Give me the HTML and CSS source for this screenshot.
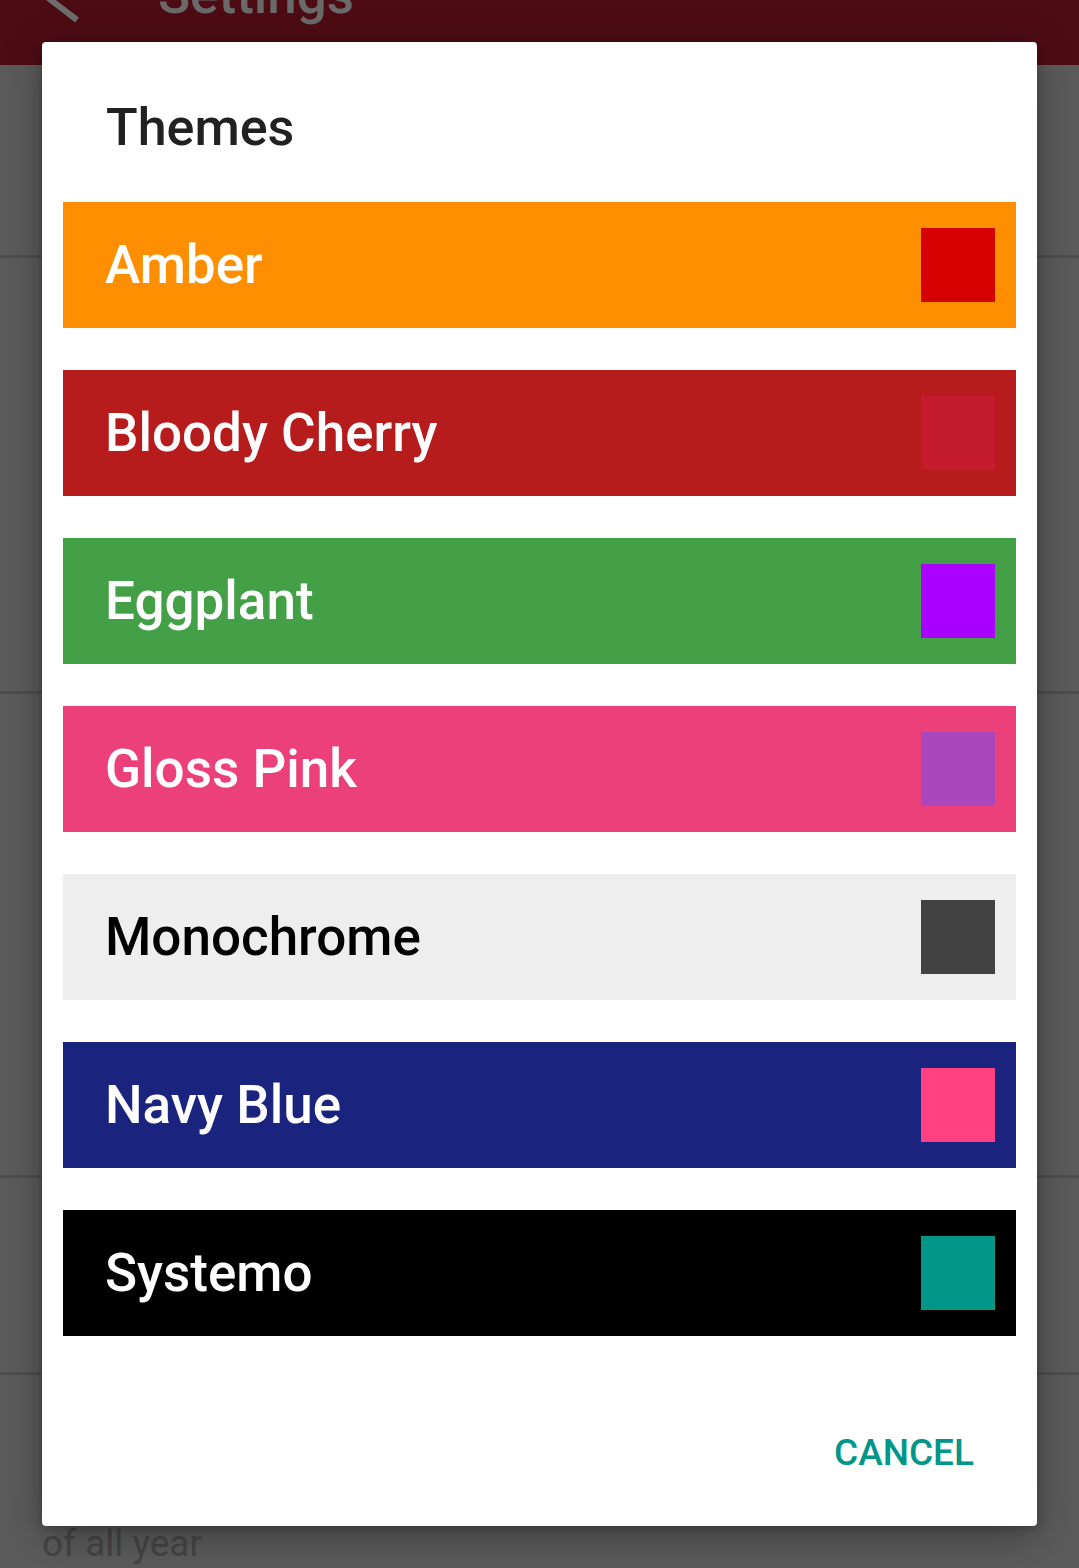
FILE: index.html
```html
<!DOCTYPE html>
<html lang="en">
<head>
<meta charset="utf-8">
<title>Settings - Themes</title>
<link rel="stylesheet" href="styles.css">
</head>
<body>
<div class="screen">
  <header class="appbar">
    <svg class="back" width="100" height="65" viewBox="0 0 100 65" aria-hidden="true">
      <path d="M30 -16 L77 20" stroke="#6c6c6c" stroke-width="6" fill="none" stroke-linecap="butt"/>
    </svg>
    <h1 class="appbar-title">Settings</h1>
  </header>
  <main class="settings">
    <section class="pref pref-1"></section>
    <section class="pref pref-2"></section>
    <section class="pref pref-3"></section>
    <section class="pref pref-4"></section>
    <section class="pref pref-5"><p class="pref-summary">of all year</p></section>
  </main>

  <div class="dialog" role="dialog">
    <h2 class="dialog-title">Themes</h2>
    <ul class="themes">
      <li class="theme t-amber"><span class="theme-name">Amber</span><span class="swatch s-amber"></span></li>
      <li class="theme t-cherry"><span class="theme-name">Bloody Cherry</span><span class="swatch s-cherry"></span></li>
      <li class="theme t-eggplant"><span class="theme-name">Eggplant</span><span class="swatch s-eggplant"></span></li>
      <li class="theme t-pink"><span class="theme-name">Gloss Pink</span><span class="swatch s-pink"></span></li>
      <li class="theme t-mono"><span class="theme-name">Monochrome</span><span class="swatch s-mono"></span></li>
      <li class="theme t-navy"><span class="theme-name">Navy Blue</span><span class="swatch s-navy"></span></li>
      <li class="theme t-systemo"><span class="theme-name">Systemo</span><span class="swatch s-systemo"></span></li>
    </ul>
    <div class="dialog-actions">
      <button class="btn-cancel" type="button">CANCEL</button>
    </div>
  </div>
</div>
</body>
</html>
```
FILE: styles.css
```css
* { box-sizing: border-box; }
html, body {
  margin: 0;
  padding: 0;
  width: 1079px;
  height: 1568px;
  overflow: hidden;
  background: #5b5b5b;
  font-family: Roboto, "Noto Sans", "Liberation Sans", sans-serif;
}
.screen {
  position: relative;
  width: 1079px;
  height: 1568px;
  overflow: hidden;
}
.appbar {
  height: 65px;
  background: #4d0c14;
  display: flex;
  align-items: flex-start;
  overflow: hidden;
}
.back {
  flex: none;
  overflow: visible;
}
.appbar-title {
  margin: -31px 0 0 58px;
  font-size: 53px;
  line-height: 53px;
  font-weight: 500;
  color: #6a6a6a;
}
.settings {
  display: flex;
  flex-direction: column;
}
.pref {
  border-bottom: 3px solid #4e4e4e;
}
.pref-1 { height: 193px; }
.pref-2 { height: 436px; }
.pref-3 { height: 484px; }
.pref-4 { height: 197px; }
.pref-5 { border-bottom: none; height: 200px; }
.pref-summary {
  margin: 149px 0 0 42px;
  font-size: 37px;
  line-height: 40px;
  color: #454545;
}

.dialog {
  position: absolute;
  left: 42px;
  top: 42px;
  width: 995px;
  height: 1484px;
  background: #ffffff;
  border-radius: 4px;
  box-shadow: 0 10px 40px rgba(0, 0, 0, 0.32), 0 2px 10px rgba(0, 0, 0, 0.2);
  padding: 0 21px;
  display: flex;
  flex-direction: column;
}
.dialog-title {
  margin: 60px 0 0 43px;
  font-size: 52px;
  line-height: 52px;
  height: 52px;
  font-weight: 500;
  color: #212121;
}
.themes {
  list-style: none;
  margin: 48px 0 0 0;
  padding: 0;
  display: flex;
  flex-direction: column;
  gap: 42px;
}
.theme {
  height: 126px;
  display: flex;
  align-items: center;
  justify-content: space-between;
  padding: 0 21px 0 42px;
  color: #ffffff;
}
.theme-name {
  font-size: 53px;
  font-weight: 500;
  line-height: 1;
}
.swatch {
  width: 74px;
  height: 74px;
  flex: none;
}
.t-amber { background: #ff8f00; }
.t-cherry { background: #b71c1c; }
.t-eggplant { background: #43a047; }
.t-pink { background: #ec407a; }
.t-mono { background: #eeeeee; color: #000000; }
.t-navy { background: #1a237e; }
.t-systemo { background: #000000; }
.s-amber { background: #d50000; }
.s-cherry { background: #c51b2e; }
.s-eggplant { background: #aa00ff; }
.s-pink { background: #ab47bc; }
.s-mono { background: #424242; }
.s-navy { background: #ff4081; }
.s-systemo { background: #009688; }

.dialog-actions {
  display: flex;
  justify-content: flex-end;
  margin-top: 98px;
  padding-right: 42px;
}
.btn-cancel {
  border: none;
  background: none;
  padding: 0;
  margin: 0;
  font-family: Roboto, "Noto Sans", "Liberation Sans", sans-serif;
  font-size: 37px;
  line-height: 38px;
  font-weight: 500;
  color: #009688;
}
```
